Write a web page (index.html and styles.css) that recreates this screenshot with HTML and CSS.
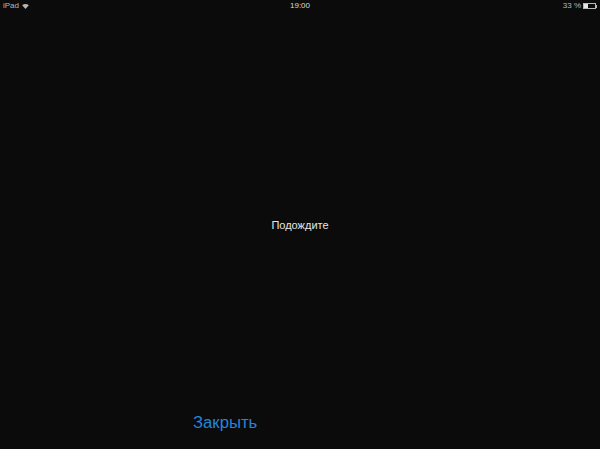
FILE: index.html
```html
<!DOCTYPE html>
<html lang="ru">
<head>
<meta charset="utf-8">
<title>Подождите</title>
<link rel="stylesheet" href="styles.css">
</head>
<body>
<div class="screen">
  <header class="status">
    <div class="status-left">
      <span>iPad</span>
      <svg class="wifi" width="7" height="5" viewBox="0 0 8 6"><path d="M0 1.6C2.3-.4 5.7-.4 8 1.6L4 6z" fill="#b5b5b5"/></svg>
    </div>
    <div class="status-time">19:00</div>
    <div class="status-right">
      <span>33 %</span>
      <div class="battery"><div class="battery-level"></div></div>
      <div class="battery-tip"></div>
    </div>
  </header>
  <main class="message">Подождите</main>
  <footer class="actions"><span class="close">Закрыть</span></footer>
</div>
</body>
</html>
```
FILE: styles.css
```css
html, body { margin: 0; padding: 0; background: #0b0b0b; }
.screen {
  width: 600px; height: 449px; overflow: hidden;
  display: flex; flex-direction: column;
  font-family: "Liberation Sans", Arial, sans-serif;
}
.status {
  height: 12px; padding: 0 3px 0 3px;
  display: grid; grid-template-columns: 1fr auto 1fr; align-items: center;
  font-size: 8px; line-height: 12px; color: #b8b8b8;
}
.status-left { display: flex; align-items: center; gap: 3px; }
.status-time { color: #dcdcdc; }
.status-right { display: flex; align-items: center; justify-content: flex-end; }
.wifi { display: block; }
.battery { width: 13px; height: 6px; margin-left: 2px; border: 1px solid #b8b8b8; box-sizing: border-box; }
.battery-level { width: 35%; height: 100%; background: #e6e6e6; }
.battery-tip { width: 1px; height: 3px; background: #b8b8b8; }
.message {
  flex: 1; display: flex; align-items: center; justify-content: center;
  color: #e6e6e6; font-size: 11px; padding-top: 27px;
}
.actions { height: 39px; padding-left: 193px; box-sizing: border-box; }
.close { color: #2585de; font-size: 16.7px; line-height: 26px; display: block; }
```
